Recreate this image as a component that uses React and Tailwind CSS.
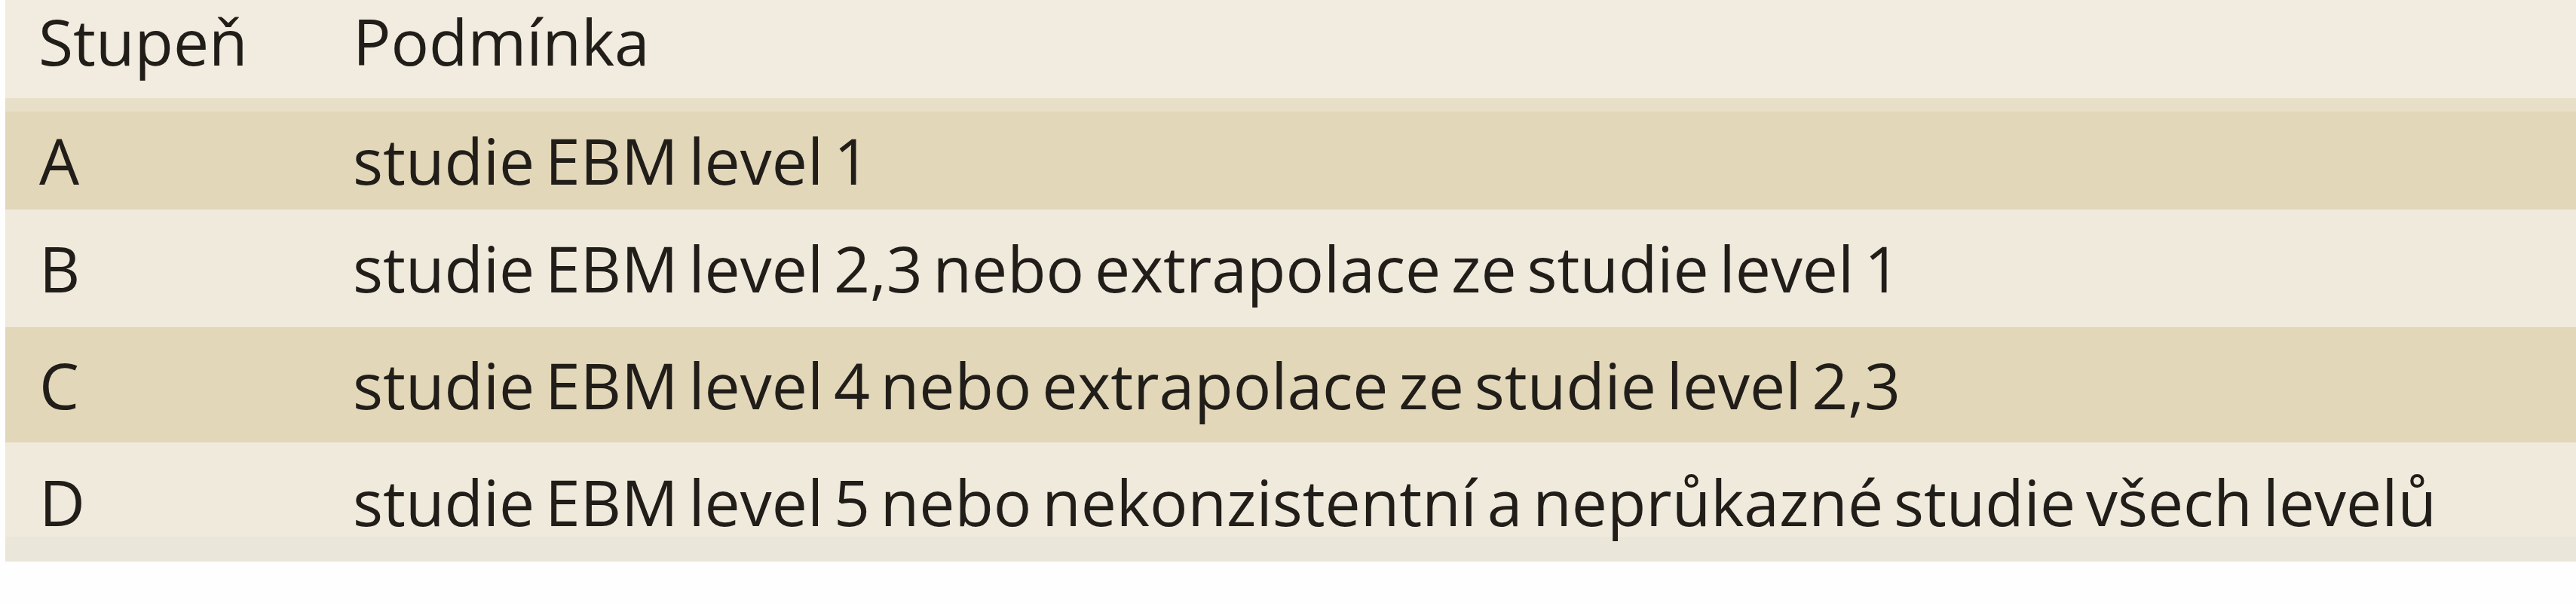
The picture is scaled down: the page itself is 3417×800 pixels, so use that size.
const rows = [
  { grade: 'A', text: 'studie EBM level 1', h: 'h-[148px] border-t-[18px] border-[#e7dfc8]', bg: 'bg-[#e2d7b9]' },
  { grade: 'B', text: 'studie EBM level 2,3 nebo extrapolace ze studie level 1', h: 'h-[156px]', bg: 'bg-[#f0eadd]' },
  { grade: 'C', text: 'studie EBM level 4 nebo extrapolace ze studie level 2,3', h: 'h-[153px]', bg: 'bg-[#e2d7b9]' },
  {
    grade: 'D',
    text: 'studie EBM level 5 nebo nekonzistentní a neprůkazné studie všech levelů',
    h: 'h-[158px] pt-[33px] border-b-[33px] border-[#ebe6da]',
    bg: 'bg-[#f0eadd]',
  },
]

export default function App() {
  return (
    <div className="min-h-[800px] w-full bg-[#fefefe] pl-[7px] font-['Open_Sans',sans-serif] text-[84px] leading-none text-[#211d19] [word-spacing:-8px]">
      <div className="w-full">
        {/* hlavička */}
        <div className="grid h-[130px] grid-cols-[461px_1fr] items-center bg-[#f1ecdf] pb-[20px]">
          <div className="pl-[44px]">Stupeň</div>
          <div>Podmínka</div>
        </div>

        {rows.map(r => (
          <div key={r.grade} className={`grid grid-cols-[461px_1fr] items-center ${r.h} ${r.bg}`}>
            <div className="pl-[45px]">{r.grade}</div>
            <div className="whitespace-nowrap">{r.text}</div>
          </div>
        ))}
      </div>
    </div>
  )
}
